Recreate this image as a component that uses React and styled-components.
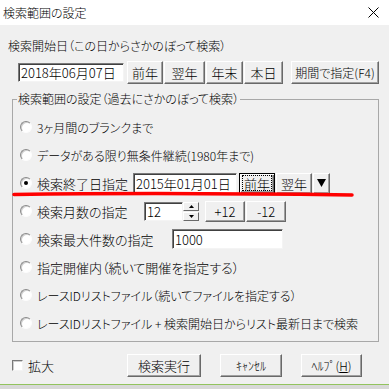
import React from 'react';
import styled, { createGlobalStyle } from 'styled-components';

const GlobalStyle = createGlobalStyle`
  html, body {
    margin: 0;
    padding: 0;
    background: #f0f0f0;
  }
  body {
    font-family: "Noto Sans CJK JP", "Noto Sans", sans-serif;
    font-size: 12px;
    font-weight: 300;
    color: #000;
    font-feature-settings: "palt";
  }
`

const Window = styled.div`
    position: relative;
    width: 389px;
    height: 389px;
    display: flex;
    flex-direction: column;
    overflow: hidden;
    background: #f0f0f0;
`

const TitleBar = styled.div`
    flex: none;
    height: 25px;
    background: #fff;
    display: flex;
    align-items: center;
    justify-content: space-between;
    padding: 0 10px 0 3px;
    line-height: 14px;
`

const Body = styled.div`
    flex: 1;
    display: flex;
    flex-direction: column;
`

const BottomEdge = styled.div`
    flex: none;
    height: 4px;
    border-top: 1px solid #92c35e;
    background: #d8d8d8;
`

const Caption = styled.div`
    margin: 14px 0 0 8px;
    line-height: 14px;
`

const Row = styled.div`
    display: flex;
    align-items: center;
    height: ${p => p.$h || 23}px;
    margin: ${p => p.$m || '0'};
    gap: ${p => p.$gap || 0}px;
`

const Strip = styled.div`
    display: flex;
    align-items: center;
    gap: ${p => p.$gap || 0}px;
    margin-left: ${p => p.$ml || 0}px;
`

const Button = styled.button`
    flex: none;
    width: ${p => p.$w}px;
    height: ${p => p.$h || 23}px;
    padding: 0;
    margin: 0 0 0 ${p => p.$ml || 0}px;
    font-family: inherit;
    font-weight: inherit;
    font-feature-settings: inherit;
    font-size: ${p => p.$fs || 13}px;
    line-height: 1;
    color: #000;
    background: #f0f0f0;
    border: 1px solid;
    border-color: ${p => p.$focus ? '#000' : '#fff #696969 #696969 #fff'};
    box-shadow: ${p => p.$focus
        ? 'inset 1px 1px 0 #fff, inset -1px -1px 0 #696969, inset -2px -2px 0 #a0a0a0'
        : 'inset -1px -1px 0 #a0a0a0'};
    display: flex;
    align-items: center;
    justify-content: center;
    u { text-decoration: underline; }
`

const FocusRing = styled.span`
    padding: 1px 1px 0;
    outline: 1px dotted #000;
    outline-offset: 0;
`

const TextBox = styled.input`
    flex: none;
    box-sizing: border-box;
    width: ${p => p.$w}px;
    height: ${p => p.$h || 19}px;
    margin: 0;
    padding: 0 2px;
    font-family: inherit;
    font-weight: inherit;
    font-size: ${p => p.$fs || 12}px;
    color: #000;
    background: #fff;
    border: 1px solid;
    border-color: #7a7a7a #f4f4f4 #f4f4f4 #7a7a7a;
    box-shadow: inset 1px 1px 0 #404040;
    outline: none;
`

const Spinner = styled.div`
    flex: none;
    width: 16px;
    height: 19px;
    display: flex;
    flex-direction: column;
    gap: 1px;
`

const SpinHalf = styled.div`
    flex: 1;
    background: #f0f0f0;
    border: 1px solid;
    border-color: #fff #696969 #696969 #fff;
    display: flex;
    align-items: center;
    justify-content: center;
`

const Group = styled.fieldset`
    margin: 8px 10px 0 12px;
    padding: 7px 0 4px 4px;
    border: 1px solid #a8a8a8;
    min-inline-size: 0;
`

const Legend = styled.legend`
    padding: 0 1px;
    line-height: 14px;
`

const RadioRow = styled.div`
    display: flex;
    align-items: center;
    height: 28px;
    padding-left: 3px;
`

const Radio = styled.span`
    flex: none;
    box-sizing: border-box;
    width: 12px;
    height: 12px;
    margin-right: 5px;
    border-radius: 50%;
    border: 1px solid;
    border-color: #8a8a8a #fcfcfc #fcfcfc #8a8a8a;
    background: #fff;
    box-shadow: inset 1px 1px 0 #cfcfcf;
    display: flex;
    align-items: center;
    justify-content: center;
    &::after {
        content: '';
        width: 4px;
        height: 4px;
        border-radius: 50%;
        background: ${p => p.$checked ? '#000' : 'transparent'};
    }
`

const RadioText = styled.span`
    font-size: ${p => p.$fs || 12}px;
    min-width: ${p => p.$min || 0}px;
    white-space: nowrap;
`

const Footer = styled.div`
    display: flex;
    align-items: center;
    height: 23px;
    margin-top: 12px;
    padding: 0 27px 0 12px;
`

const Check = styled.label`
    display: flex;
    align-items: center;
    gap: 5px;
    font-size: 13px;
    margin-right: auto;
`

const Box = styled.span`
    box-sizing: border-box;
    width: 11px;
    height: 11px;
    background: #fff;
    border: 1px solid;
    border-color: #7a7a7a #f4f4f4 #f4f4f4 #7a7a7a;
    box-shadow: inset 1px 1px 0 #cfcfcf;
`

const Annotation = styled.svg`
    position: absolute;
    left: 0;
    top: 0;
    pointer-events: none;
`

const Tri = ({ down, w = 5, h = 3, color = '#000' }) => (
    <svg width={w} height={h} viewBox={`0 0 ${w} ${h}`}>
        <polygon
            points={down ? `0,0 ${w},0 ${w / 2},${h}` : `0,${h} ${w},${h} ${w / 2},0`}
            fill={color}
        />
    </svg>
)

const options = [
    { label: '3ヶ月間のブランクまで' },
    { label: 'データがある限り無条件継続(1980年まで)' },
    { label: '検索終了日指定', fs: 13, min: 96, checked: true, extra: 'end' },
    { label: '検索月数の指定', fs: 13, min: 107, extra: 'months' },
    { label: '検索最大件数の指定', fs: 13, min: 135, extra: 'max' },
    { label: '指定開催内（続いて開催を指定する）', fs: 13 },
    { label: 'レースIDリストファイル（続いてファイルを指定する）' },
    { label: 'レースIDリストファイル + 検索開始日からリスト最新日まで検索' },
]

const renderExtra = (kind) => {
    if (kind === 'end') {
        return (
            <Row $h={21} $gap={2}>
                <TextBox $w={104} $h={21} $fs={13} defaultValue="2015年01月01日" readOnly />
                <Strip $gap={1}>
                    <Button $w={36} $h={21} $focus><FocusRing>前年</FocusRing></Button>
                    <Button $w={36} $h={21}>翌年</Button>
                    <Button $w={17} $h={21}><Tri down w={9} h={8} /></Button>
                </Strip>
            </Row>
        )
    }
    if (kind === 'months') {
        return (
            <Row $h={21}>
                <TextBox $w={39} $fs={13} defaultValue="12" readOnly />
                <Spinner>
                    <SpinHalf><Tri w={5} h={3} /></SpinHalf>
                    <SpinHalf><Tri down w={5} h={3} /></SpinHalf>
                </Spinner>
                <Strip $gap={1} $ml={6}>
                    <Button $w={40} $h={21}>+12</Button>
                    <Button $w={40} $h={21}>-12</Button>
                </Strip>
            </Row>
        )
    }
    if (kind === 'max') {
        return <TextBox $w={111} $h={20} $fs={13} defaultValue="1000" readOnly />
    }
    return null
}

const App = () => {
    return (
        <Window>
            <GlobalStyle />
            <TitleBar>
                <span>検索範囲の設定</span>
                <svg width="11" height="11" viewBox="0 0 11 11">
                    <path d="M0.5 0.5 L10.5 10.5 M10.5 0.5 L0.5 10.5" stroke="#000" strokeWidth="1" />
                </svg>
            </TitleBar>

            <Body>
                <Caption>検索開始日（この日からさかのぼって検索）</Caption>
                <Row $m="8px 0 0 18px" $gap={3}>
                    <TextBox $w={106} $fs={13} defaultValue="2018年06月07日" readOnly />
                    <Strip $gap={1}>
                        <Button $w={36}>前年</Button>
                        <Button $w={41}>翌年</Button>
                        <Button $w={37}>年末</Button>
                        <Button $w={39}>本日</Button>
                    </Strip>
                    <Button $w={88} $fs={12} $ml={5}>期間で指定(F4)</Button>
                </Row>

                <Group>
                    <Legend>検索範囲の設定（過去にさかのぼって検索）</Legend>
                    {options.map((o) => (
                        <RadioRow key={o.label}>
                            <Radio $checked={o.checked} />
                            <RadioText $fs={o.fs} $min={o.min}>{o.label}</RadioText>
                            {renderExtra(o.extra)}
                        </RadioRow>
                    ))}
                </Group>

                <Footer>
                    <Check><Box />拡大</Check>
                    <Strip $gap={19}>
                        <Button $w={74}>検索実行</Button>
                        <Button $w={62} $fs={12}>ｷｬﾝｾﾙ</Button>
                        <Button $w={61} $fs={12}>ﾍﾙﾌﾟ(<u>H</u>)</Button>
                    </Strip>
                </Footer>
            </Body>
            <BottomEdge />

            <Annotation width="389" height="389">
                <path d="M14 194.5 C 110 193, 250 193.5, 352 195" stroke="#ff0000" strokeWidth="3.5"
                      strokeLinecap="round" fill="none" />
            </Annotation>
        </Window>
    )
}

export default App;
